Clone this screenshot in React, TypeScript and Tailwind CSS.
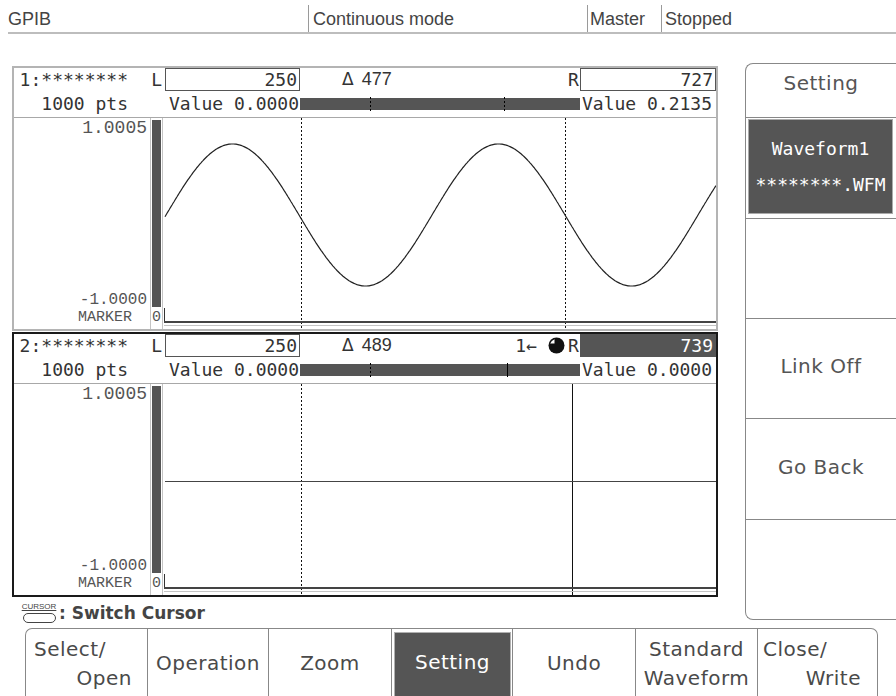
import React from "react";

const MONO = "font-['DejaVu_Sans_Mono',monospace]";
const LMONO = "font-['Liberation_Mono',monospace]";
const SANS = "font-['DejaVu_Sans',sans-serif]";

const PLOT_W = 553;
const PLOT_H = 211;

function sinePath() {
  let d = "";
  for (let x = 2; x <= PLOT_W; x++) {
    const y = 97 - 71 * Math.sin((2 * Math.PI * (x - 3)) / 266);
    d += (x === 2 ? "M" : "L") + x + " " + y.toFixed(1) + " ";
  }
  return d;
}

type PanelProps = {
  id: number;
  left: number;
  right: number;
  leftValue: string;
  rightValue: string;
  active?: boolean;
  wave?: boolean;
};

function Ball() {
  return (
    <svg width="17" height="17" viewBox="0 0 17 17">
      <circle cx="8.5" cy="8.5" r="8" fill="#111" />
      <path d="M2.2 6.5 A7 7 0 0 1 6.5 2.2 L6.5 6.5 Z" fill="#fff" />
    </svg>
  );
}

function CursorBar({ left, right, active }: { left: number; right: number; active?: boolean }) {
  const lx = Math.round((left / 1000) * 280) + 0.5;
  const rx = Math.round((right / 1000) * 280) + 0.5;
  return (
    <svg width="280" height="16" viewBox="0 0 280 16">
      <rect x="0" y="2" width="280" height="12" fill="#555" />
      <line x1={lx} y1="1" x2={lx} y2="15" stroke="#000" strokeDasharray="2 2" />
      <line
        x1={rx}
        y1="1"
        x2={rx}
        y2="15"
        stroke="#000"
        strokeDasharray={active ? undefined : "2 2"}
      />
    </svg>
  );
}

function Plot({ left, right, active, wave }: { left: number; right: number; active?: boolean; wave?: boolean }) {
  const lx = Math.round((left / 1000) * PLOT_W) + 0.5;
  const rx = Math.round((right / 1000) * PLOT_W) + 0.5;
  return (
    <svg width={PLOT_W} height={PLOT_H} viewBox={`0 0 ${PLOT_W} ${PLOT_H}`}>
      <line x1={lx} y1="0" x2={lx} y2={PLOT_H} stroke="#111" strokeDasharray="2 2" />
      <line
        x1={rx}
        y1="0"
        x2={rx}
        y2={PLOT_H}
        stroke="#111"
        strokeDasharray={active ? undefined : "2 2"}
      />
      {wave ? (
        <path d={sinePath()} fill="none" stroke="#222" strokeWidth="1.2" />
      ) : (
        <line x1="2" y1="97.5" x2={PLOT_W} y2="97.5" stroke="#444" />
      )}
      <line x1="1.5" y1="190" x2="1.5" y2="205" stroke="#333" />
      <line x1="1" y1="204" x2={PLOT_W} y2="204" stroke="#444" strokeWidth="2" />
      <line x1="1" y1="207.5" x2={PLOT_W} y2="207.5" stroke="#c4c4c4" />
    </svg>
  );
}

function Panel({ id, left, right, leftValue, rightValue, active, wave }: PanelProps) {
  return (
    <div
      className={`w-[706px] h-[265px] border-2 flex flex-col ${
        active ? "border-[#1a1a1a]" : "border-[#b4b4b4]"
      }`}
    >
      <div className={`grid grid-cols-[136px_15px_135px_265px_15px_136px] h-[23px] ${MONO} text-[18px] leading-[21px] text-[#333]`}>
        <div className="text-right pr-[22px] pt-[1px]">{id}:********</div>
        <div className="text-right pr-[3px] pt-[1px]">L</div>
        <div className="border border-[#555] text-right pr-[2px]">{left}</div>
        <div className="flex items-center pl-[42px]">
          <span className={`${SANS} text-[17px] mr-[8px]`}>Δ</span>
          <span className="font-['Liberation_Sans',sans-serif] text-[18px]">{right - left}</span>
          {active && (
            <span className="ml-auto flex items-center gap-[11px]">
              <span>1←</span>
              <Ball />
            </span>
          )}
        </div>
        <div className="pl-[3px] pt-[1px]">R</div>
        <div
          className={`border border-[#555] text-right pr-[2px] ${
            active ? "bg-[#555] text-white" : ""
          }`}
        >
          {right}
        </div>
      </div>
      <div className={`grid grid-cols-[151px_135px_280px_136px] h-[27px] items-center border-b border-[#a8a8a8] ${MONO} text-[18px] leading-[20px] text-[#333]`}>
        <div className="text-right pr-[37px]">1000 pts</div>
        <div className="text-right pr-[1px]">{leftValue}</div>
        <div className="flex items-center">
          <CursorBar left={left} right={right} active={active} />
        </div>
        <div className="pl-[2px]">{rightValue}</div>
      </div>
      <div className="grid grid-cols-[136px_13px_553px] flex-1">
        <div className={`flex flex-col text-right ${LMONO} text-[#555] pr-[3px] pb-[3px]`}>
          <div className="text-[18px] leading-[16px] pt-[2px]">1.0005</div>
          <div className="mt-auto text-[16px] leading-[17px]">-1.0000</div>
          <div className="text-[15px] leading-[17px] pr-[15px]">MARKER</div>
        </div>
        <div className="border-x border-[#c4c4c4] flex flex-col">
          <div className="flex-1 mt-[2px] ml-[1px] mr-[1px] bg-[#555]" />
          <div className={`h-[22px] flex items-center justify-center ${LMONO} text-[15px] text-[#555]`}>0</div>
        </div>
        <Plot left={left} right={right} active={active} wave={wave} />
      </div>
    </div>
  );
}

function TopBar() {
  return (
    <div className="h-[34px] pl-[8px] flex flex-col">
      <div className="flex h-[32px] text-[18px] leading-[22px] font-['Liberation_Sans',sans-serif] text-[#444]">
        <div className="w-[300px] pt-[8px]">GPIB</div>
        <div className="w-[279px] mt-[5px] pt-[3px] pl-[4px] border-l border-[#9a9a9a]">Continuous mode</div>
        <div className="w-[74px] mt-[5px] pt-[3px] pl-[2px] border-l border-[#9a9a9a]">Master</div>
        <div className="flex-1 mt-[5px] pt-[3px] pl-[3px] border-l border-[#9a9a9a]">Stopped</div>
      </div>
      <div className="h-[2px] bg-[#bdbdbd]" />
    </div>
  );
}

function SideMenu() {
  return (
    <div className={`w-[151px] h-[557px] border-l border-y border-[#888] rounded-l-[8px] flex flex-col ${SANS} text-[20px] text-[#555]`}>
      <div className="h-[54px] border-b border-[#888] flex justify-center pt-[7px] leading-[24px] tracking-[0.5px]">Setting</div>
      <div className="h-[101px] border-b border-[#888] pt-[1px] pb-[4px] pl-[2px] pr-[3px]">
        <div className={`h-full bg-[#555] border border-[#aaa] flex flex-col items-center justify-center gap-[12px] text-white ${MONO} text-[18px] leading-[24px]`}>
          <div>Waveform1</div>
          <div>********.WFM</div>
        </div>
      </div>
      <div className="h-[100px] border-b border-[#888]" />
      <div className="h-[100px] border-b border-[#888] flex items-center justify-center pb-[6px] tracking-[0.5px]">Link Off</div>
      <div className="h-[101px] border-b border-[#888] flex items-center justify-center pb-[4px] tracking-[0.5px]">Go Back</div>
      <div className="flex-1" />
    </div>
  );
}

function CursorHint() {
  return (
    <div className="h-[30px] flex items-center pl-[10px] pt-[2px] text-[#444]">
      <div className="w-[34px] flex flex-col items-center">
        <span className="font-['Liberation_Sans',sans-serif] text-[8px] leading-[8px] underline">CURSOR</span>
        <div className="mt-[2px] w-[33px] h-[10px] rounded-full border-[1.5px] border-[#444]" />
      </div>
      <span className={`ml-[3px] ${SANS} font-bold text-[17px] leading-[20px]`}>: Switch Cursor</span>
    </div>
  );
}

const keys = [
  { w: "w-[122px]", top: "Select/", bottom: "Open", pad: "pl-[8px]", padR: "pr-[15px]" },
  { w: "w-[121px]", label: "Operation" },
  { w: "w-[123px]", label: "Zoom" },
  { w: "w-[121px]", label: "Setting", active: true },
  { w: "w-[123px]", label: "Undo" },
  { w: "w-[122px]", top: "Standard", bottom: "Waveform", center: true },
  { w: "w-[121px]", top: "Close/", bottom: "Write", pad: "pl-[5px]", padR: "pr-[16px]" },
];

function SoftKeys() {
  return (
    <div className={`flex pl-[25px] h-[68px] ${SANS} text-[20px] text-[#4a4a4a]`}>
      {keys.map((k, i) => {
        const first = i === 0;
        const last = i === keys.length - 1;
        return (
          <div
            key={i}
            className={`${k.w} h-full border-t border-l border-[#888] ${first ? "rounded-tl-[7px]" : ""} ${
              last ? "border-r rounded-tr-[7px]" : ""
            }`}
          >
            {k.active ? (
              <div className="h-full pt-[3px] pl-[2px] pr-[1px]">
                <div className="h-[80px] bg-[#555] border border-[#b0b0b0] text-white flex justify-center pt-[17px] leading-[24px] tracking-[0.5px]">
                  {k.label}
                </div>
              </div>
            ) : k.label ? (
              <div className="h-full flex items-center justify-center tracking-[0.5px]">{k.label}</div>
            ) : k.center ? (
              <div className="h-full pt-[6px] leading-[29px] text-center tracking-[0.5px]">
                <div>{k.top}</div>
                <div>{k.bottom}</div>
              </div>
            ) : (
              <div className="h-full pt-[6px] leading-[29px] tracking-[0.5px]">
                <div className={`text-left ${k.pad}`}>{k.top}</div>
                <div className={`text-right ${k.padR}`}>{k.bottom}</div>
              </div>
            )}
          </div>
        );
      })}
    </div>
  );
}

export default function App() {
  return (
    <div className="w-[896px] h-[696px] overflow-hidden bg-white text-[#333]">
      <TopBar />
      <div className="flex h-[594px]">
        <div className="w-[718px] pl-[12px] pt-[32px] flex flex-col">
          <Panel id={1} left={250} right={727} leftValue="Value 0.0000" rightValue="Value 0.2135" wave />
          <div className="h-px" />
          <Panel id={2} left={250} right={739} leftValue="Value 0.0000" rightValue="Value 0.0000" active />
          <CursorHint />
        </div>
        <div className="ml-[27px] pt-[29px]">
          <SideMenu />
        </div>
      </div>
      <SoftKeys />
    </div>
  );
}
